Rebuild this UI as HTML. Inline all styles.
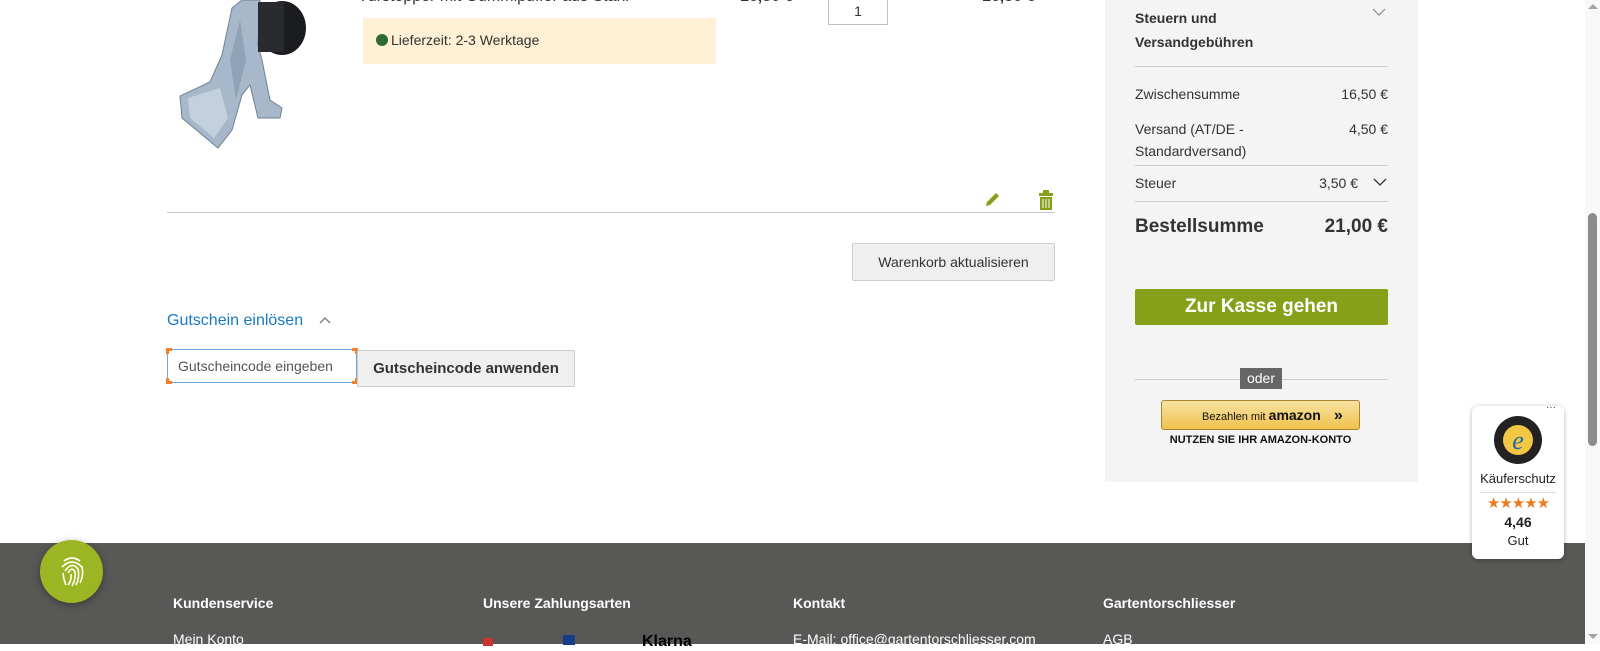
<!DOCTYPE html>
<html><head><meta charset="utf-8"><style>
*{box-sizing:border-box;margin:0;padding:0}
body{width:1600px;height:644px;overflow:hidden;position:relative;background:#fff;font-family:"Liberation Sans","DejaVu Sans",sans-serif;color:#333;font-size:14px}
.a{position:absolute}
.side{left:1105px;top:0;width:313px;height:482px;background:#f4f4f4}
.row{position:absolute;left:1135px;width:253px;font-size:14px;color:#333}
.row .r{position:absolute;right:0;top:0}
.hr{position:absolute;height:1px;background:#ccc}
footer{position:absolute;left:0;top:543px;width:1585px;height:101px;background:#585856;color:#fff}
footer h4{position:absolute;top:52px;font-size:14px;font-weight:bold}
footer span{position:absolute;top:88px;font-size:14px}
</style></head><body>

<!-- product image -->
<svg class="a" style="left:170px;top:0" width="150" height="150" viewBox="0 0 150 150">
<path d="M62 8 L72 0 L90 0 L88 45 L92 60 L100 100 L112 108 L110 118 L88 118 L80 85 L72 95 L62 130 L48 148 L12 118 L10 96 L40 82 L52 55 Z" fill="#a6b8c9" stroke="#6f8294"/>
<path d="M18 98 L50 88 L58 118 L44 138 L20 118 Z" fill="#c3d1de"/>
<path d="M60 60 L70 20 L76 60 L66 100 Z" fill="#8fa3b6"/>
<ellipse cx="112" cy="28" rx="24" ry="27" fill="#1b1c20"/>
<rect x="88" y="2" width="26" height="50" fill="#2a2b31"/>
</svg>
<div class="a" style="left:358px;top:-12px;font-size:16px;color:#333">Türstopper mit Gummipuffer aus Stahl</div>
<div class="a" style="left:740px;top:-12px;font-size:16px;font-weight:bold;color:#333">16,50 €</div>
<div class="a" style="left:982px;top:-12px;font-size:16px;font-weight:bold;color:#333">16,50 €</div>
<div class="a" style="left:828px;top:-10px;width:60px;height:35px;border:1px solid #c2c2c2;background:#fff;text-align:center;padding-top:12px;font-size:14px">1</div>
<div class="a" style="left:363px;top:18px;width:353px;height:46px;background:#fdf0d5;padding:14px 0 0 13px;font-size:14px;color:#333"><span style="display:inline-block;width:12px;height:12px;border-radius:50%;background:#2d6b33;vertical-align:-1px;margin-right:3px"></span>Lieferzeit: 2-3 Werktage</div>
<svg class="a" style="left:983px;top:190px" width="18" height="18" viewBox="0 0 18 18"><path d="M3 16 L4 12 L13 3 L16 6 L7 15 Z" fill="#86a01a"/></svg>
<svg class="a" style="left:1038px;top:190px" width="16" height="20" viewBox="0 0 16 20"><rect x="5" y="0" width="6" height="3" fill="#86a01a"/><rect x="1" y="3" width="14" height="3" fill="#86a01a"/><rect x="2" y="7" width="12" height="13" fill="#86a01a"/><path d="M5 9v9M8 9v9M11 9v9" stroke="#fff" stroke-width="1"/></svg>
<div class="hr" style="left:167px;top:212px;width:888px;background:#c6c6c6"></div>
<div class="a" style="left:852px;top:243px;width:203px;height:38px;background:#efefef;border:1px solid #cdcdcd;border-radius:2px;text-align:center;line-height:36px;font-size:14px;color:#333">Warenkorb aktualisieren</div>
<div class="a" style="left:167px;top:312px;font-size:16px;color:#1979c3">Gutschein einlösen <svg width="14" height="10" style="margin-left:10px" viewBox="0 0 14 10"><path d="M2 8 L7 3 L12 8" fill="none" stroke="#777" stroke-width="1.3"/></svg></div>
<div class="a" style="left:167px;top:349px;width:190px;height:34px;border:1px solid #68a8e0;background:#fff;font-size:14px;color:#555;padding:8px 0 0 10px;overflow:hidden;white-space:nowrap">Gutscheincode eingeben</div>
<div class="a" style="left:166px;top:348px;width:6px;height:6px;border-left:3px solid #f68028;border-top:3px solid #f68028"></div>
<div class="a" style="left:352px;top:348px;width:6px;height:6px;border-right:3px solid #f68028;border-top:3px solid #f68028"></div>
<div class="a" style="left:166px;top:378px;width:6px;height:6px;border-left:3px solid #f68028;border-bottom:3px solid #f68028"></div>
<div class="a" style="left:352px;top:378px;width:6px;height:6px;border-right:3px solid #f68028;border-bottom:3px solid #f68028"></div>
<div class="a" style="left:357px;top:350px;width:218px;height:37px;background:#efefef;border:1px solid #cdcdcd;border-radius:2px;text-align:center;line-height:35px;font-size:15px;font-weight:bold;color:#333">Gutscheincode anwenden</div>

<!-- sidebar -->
<div class="a side"></div>
<div class="row" style="top:6px;line-height:24px;font-weight:bold;font-size:14px">Steuern und<br>Versandgebühren</div>
<svg class="a" style="left:1372px;top:7px" width="14" height="10"><path d="M1 2 L7 8 L13 2" fill="none" stroke="#888" stroke-width="1.2"/></svg>
<div class="hr" style="left:1135px;top:66px;width:253px"></div>
<div class="row" style="top:86px">Zwischensumme<span class="r">16,50 €</span></div>
<div class="row" style="top:118px;line-height:22px">Versand (AT/DE -<br>Standardversand)<span class="r" style="top:0">4,50 €</span></div>
<div class="hr" style="left:1135px;top:165px;width:253px"></div>
<div class="row" style="top:175px">Steuer<span class="r" style="right:30px">3,50 €</span></div>
<svg class="a" style="left:1373px;top:177px" width="14" height="10"><path d="M1 2 L7 8 L13 2" fill="none" stroke="#333" stroke-width="1.3"/></svg>
<div class="hr" style="left:1135px;top:201px;width:253px"></div>
<div class="row" style="top:216px;font-size:19px;font-weight:bold">Bestellsumme<span class="r">21,00 €</span></div>
<div class="a" style="left:1135px;top:289px;width:253px;height:36px;background:#86a01a;border-radius:2px;color:#fff;font-size:19px;font-weight:bold;text-align:center;line-height:36px">Zur Kasse gehen</div>
<div class="hr" style="left:1135px;top:379px;width:253px"></div>
<div class="a" style="left:1240px;top:368px;width:42px;height:21px;background:#666;color:#fff;font-size:14px;text-align:center;line-height:20px">oder</div>
<div class="a" style="left:1161px;top:400px;width:199px;height:30px;background:linear-gradient(#f8e3a3,#f0c14b);border:1px solid #a88734;border-radius:3px;font-size:11px;color:#111;padding:6px 0 0 40px;white-space:nowrap">Bezahlen mit <b style="font-size:14px">amazon</b> <b style="font-size:16px;margin-left:10px">»</b></div>
<div class="a" style="left:1160px;top:434px;width:201px;text-align:center;font-size:11px;font-weight:bold;color:#111">NUTZEN SIE IHR AMAZON-KONTO</div>

<footer>
<h4 style="left:173px">Kundenservice</h4>
<h4 style="left:483px">Unsere Zahlungsarten</h4>
<h4 style="left:793px">Kontakt</h4>
<h4 style="left:1103px">Gartentorschliesser</h4>
<span style="left:173px">Mein Konto</span>
<span style="left:793px">E-Mail: office@gartentorschliesser.com</span>
<span style="left:1103px">AGB</span>
<span style="left:483px;top:95px;width:10px;height:8px;background:#c33"></span>
<span style="left:563px;top:92px;width:12px;height:10px;background:#1a3b8a"></span>
<span style="left:642px;top:90px;font-weight:bold;color:#000;font-size:16px">Klarna</span>
</footer>

<!-- trusted shops -->
<div class="a" style="left:1472px;top:406px;width:92px;height:153px;background:#fff;border-radius:6px;box-shadow:0 1px 5px rgba(0,0,0,.3)"></div>
<div class="a" style="left:1546px;top:402px;font-size:10px;color:#333">···</div>
<svg class="a" style="left:1493px;top:415px" width="50" height="50" viewBox="0 0 50 50"><circle cx="25" cy="25" r="24" fill="#222"/><circle cx="25" cy="25" r="15" fill="#f3c644"/><text x="25" y="34" text-anchor="middle" font-family="Liberation Serif" font-style="italic" font-size="26" fill="#1a6aa8">e</text></svg>
<div class="a" style="left:1472px;top:471px;width:92px;text-align:center;font-size:13px;color:#222">Käuferschutz</div>
<div class="hr" style="left:1480px;top:492px;width:76px;background:#ddd"></div>
<div class="a" style="left:1472px;top:494px;width:92px;text-align:center;font-size:15px;color:#e97c1f;letter-spacing:-1px">★★★★★</div>
<div class="a" style="left:1472px;top:514px;width:92px;text-align:center;font-size:14px;font-weight:bold;color:#222">4,46</div>
<div class="a" style="left:1472px;top:533px;width:92px;text-align:center;font-size:13px;color:#222">Gut</div>

<div class="a" style="left:40px;top:540px;width:63px;height:63px;border-radius:50%;background:#9cb623;box-shadow:0 2px 8px rgba(0,0,0,.35)"></div>
<svg class="a" style="left:56px;top:555px" width="32" height="34" viewBox="0 0 32 34" fill="none" stroke="#fff" stroke-width="1.6"><path d="M8 6 Q16 0 24 6"/><path d="M6 12 Q16 2 26 12 Q28 20 24 28"/><path d="M9 16 Q16 6 22 14 Q24 22 20 30"/><path d="M12 18 Q16 11 19 17 Q20 24 16 31"/><path d="M15 19 Q16 25 12 30"/><path d="M7 18 Q8 26 10 30"/></svg>

<!-- scrollbar -->
<div class="a" style="left:1585px;top:0;width:15px;height:644px;background:#f8f8f8"></div>
<div class="a" style="left:1588px;top:213px;width:9px;height:233px;background:#8c8c8c;border-radius:5px"></div>
<div class="a" style="left:1588px;top:4px;width:0;height:0;border-left:5px solid transparent;border-right:5px solid transparent;border-bottom:5px solid #a3a3a3"></div>
<div class="a" style="left:1588px;top:634px;width:0;height:0;border-left:5px solid transparent;border-right:5px solid transparent;border-top:5px solid #a3a3a3"></div>
</body></html>
